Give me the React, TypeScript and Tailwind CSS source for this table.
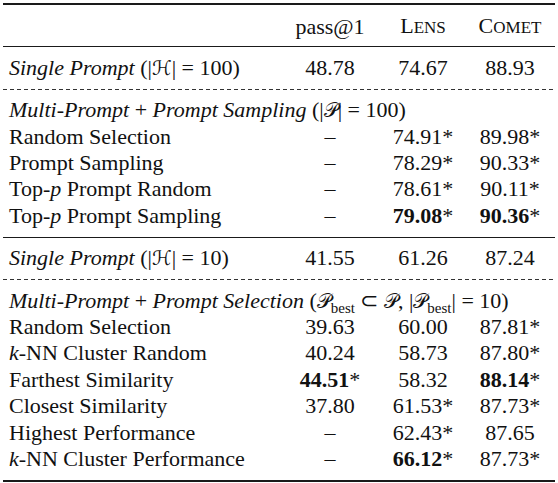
import React from "react";

const cols = "grid grid-cols-[275px_92px_94px_80px] items-center h-[26.4px] leading-[26.4px] pl-[6px]";

const M = ({ children }: { children: React.ReactNode }) => (
  <span className="[font-family:'DejaVu_Serif','DejaVu_Sans',serif] text-[20px]">{children}</span>
);

const Sub = ({ children }: { children: React.ReactNode }) => (
  <span className="relative top-[5px] text-[15px] not-italic">{children}</span>
);

const St = () => <span>*</span>;

type Cell = React.ReactNode;

function Row({ label, a, b, c }: { label: React.ReactNode; a: Cell; b: Cell; c: Cell }) {
  return (
    <div className={cols}>
      <div className="whitespace-nowrap">{label}</div>
      <div className="text-center whitespace-nowrap">{a}</div>
      <div className="text-center whitespace-nowrap">{b}</div>
      <div className="text-center whitespace-nowrap">{c}</div>
    </div>
  );
}

function Sep() {
  return <div className="h-[7.5px]" />;
}

function Dashed() {
  return (
    <div className="h-px w-full bg-[repeating-linear-gradient(to_right,#333_0,#333_4px,transparent_4px,transparent_7px)]" />
  );
}

const dash = "–";

export default function App() {
  return (
    <div className="w-[558px] h-[483px] bg-white text-[#111] [font-family:'Liberation_Serif',serif] text-[22px] pt-[3px]">
      <div className="ml-[3px] w-[552px]">
        <div className="h-[2px] bg-[#1a1a1a]" />
        <Sep />
        <Row
          label=""
          a={<span>pass@1</span>}
          b={
            <span>
              L<span className="text-[17px]">ENS</span>
            </span>
          }
          c={
            <span>
              C<span className="text-[17px]">OMET</span>
            </span>
          }
        />
        <Sep />
        <div className="h-px bg-[#1a1a1a]" />
        <Sep />
        <Row
          label={
            <span>
              <i>Single Prompt</i> (|<M>ℋ</M>| = 100)
            </span>
          }
          a="48.78"
          b="74.67"
          c="88.93"
        />
        <Sep />
        <Dashed />
        <Sep />
        <div className="h-[26.4px] leading-[26.4px] pl-[6px] whitespace-nowrap">
          <i>Multi-Prompt</i> + <i>Prompt Sampling</i> (|<M>𝒫</M>| = 100)
        </div>
        <Row label="Random Selection" a={dash} b={<>74.91<St /></>} c={<>89.98<St /></>} />
        <Row label="Prompt Sampling" a={dash} b={<>78.29<St /></>} c={<>90.33<St /></>} />
        <Row
          label={<span>Top-<i>p</i> Prompt Random</span>}
          a={dash}
          b={<>78.61<St /></>}
          c={<>90.11<St /></>}
        />
        <Row
          label={<span>Top-<i>p</i> Prompt Sampling</span>}
          a={dash}
          b={<><b>79.08</b><St /></>}
          c={<><b>90.36</b><St /></>}
        />
        <Sep />
        <div className="h-px bg-[#1a1a1a]" />
        <Sep />
        <Row
          label={
            <span>
              <i>Single Prompt</i> (|<M>ℋ</M>| = 10)
            </span>
          }
          a="41.55"
          b="61.26"
          c="87.24"
        />
        <Sep />
        <Dashed />
        <Sep />
        <div className="h-[26.4px] leading-[26.4px] pl-[6px] whitespace-nowrap">
          <i>Multi-Prompt</i> + <i>Prompt Selection</i> (<M>𝒫</M>
          <Sub>best</Sub> ⊂ <M>𝒫</M>, |<M>𝒫</M>
          <Sub>best</Sub>| = 10)
        </div>
        <Row label="Random Selection" a="39.63" b="60.00" c={<>87.81<St /></>} />
        <Row
          label={<span><i>k</i>-NN Cluster Random</span>}
          a="40.24"
          b="58.73"
          c={<>87.80<St /></>}
        />
        <Row
          label="Farthest Similarity"
          a={<><b>44.51</b><St /></>}
          b="58.32"
          c={<><b>88.14</b><St /></>}
        />
        <Row label="Closest Similarity" a="37.80" b={<>61.53<St /></>} c={<>87.73<St /></>} />
        <Row label="Highest Performance" a={dash} b={<>62.43<St /></>} c="87.65" />
        <Row
          label={<span><i>k</i>-NN Cluster Performance</span>}
          a={dash}
          b={<><b>66.12</b><St /></>}
          c={<>87.73<St /></>}
        />
        <Sep />
        <div className="h-[2px] bg-[#1a1a1a]" />
      </div>
    </div>
  );
}
